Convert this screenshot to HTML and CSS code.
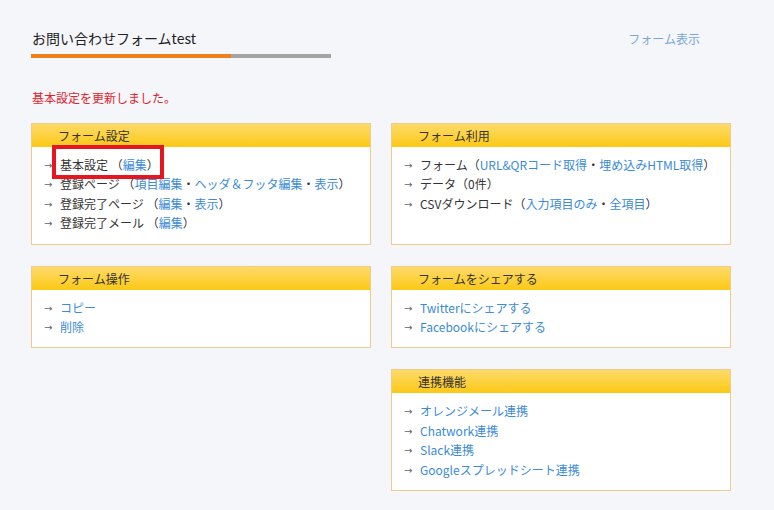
FILE: index.html
```html
<!DOCTYPE html>
<html lang="ja">
<head>
    <meta charset="UTF-8">
    <meta name="viewport" content="width=device-width, initial-scale=1.0">
    <title>お問い合わせフォームtest</title>

    <link rel="stylesheet" href="styles.css">
</head>
<body>

    <div class="page">
        <div class="title_row">
            <div class="title_block">
                <h1 class="title">お問い合わせフォームtest</h1>
                <div class="progress"><span class="progress_done"></span></div>
            </div>
            <a class="view_link" href="#">フォーム表示</a>
        </div>

        <p class="notice">基本設定を更新しました。</p>

        <div class="panels">
            <div class="panel">
                <div class="panel_head">フォーム設定</div>
                <ul class="panel_body">
                    <li>基本設定 （<a href="#">編集</a>）</li>
                    <li>登録ページ （<a href="#">項目編集</a>・<a href="#">ヘッダ＆フッタ編集</a>・<a href="#">表示</a>）</li>
                    <li>登録完了ページ （<a href="#">編集</a>・<a href="#">表示</a>）</li>
                    <li>登録完了メール （<a href="#">編集</a>）</li>
                </ul>
                <span class="highlight"></span>
            </div>

            <div class="panel">
                <div class="panel_head">フォーム利用</div>
                <ul class="panel_body">
                    <li>フォーム（<a href="#">URL&amp;QRコード取得</a>・<a href="#">埋め込みHTML取得</a>）</li>
                    <li>データ（0件）</li>
                    <li>CSVダウンロード（<a href="#">入力項目のみ</a>・<a href="#">全項目</a>）</li>
                </ul>
            </div>

            <div class="panel">
                <div class="panel_head">フォーム操作</div>
                <ul class="panel_body">
                    <li><a href="#">コピー</a></li>
                    <li><a href="#">削除</a></li>
                </ul>
            </div>

            <div class="panel">
                <div class="panel_head">フォームをシェアする</div>
                <ul class="panel_body">
                    <li><a href="#">Twitterにシェアする</a></li>
                    <li><a href="#">Facebookにシェアする</a></li>
                </ul>
            </div>

            <div class="panel panel_right">
                <div class="panel_head">連携機能</div>
                <ul class="panel_body">
                    <li><a href="#">オレンジメール連携</a></li>
                    <li><a href="#">Chatwork連携</a></li>
                    <li><a href="#">Slack連携</a></li>
                    <li><a href="#">Googleスプレッドシート連携</a></li>
                </ul>
            </div>
        </div>
    </div>

</body>
</html>
```

FILE: styles.css
```css
*,*::after,*::before{
    box-sizing: border-box;
    margin: 0;
    padding: 0;
}

body{
    background-color: #f5f6fa;
    font-family: "Noto Sans CJK JP", "Noto Sans", sans-serif;
    color: #333;
}

a{
    color: #3b8bd6;
    text-decoration: none;
}

.page{
    padding: 28px 0 0 31px;
    width: 731px;
}

.title_row{
    display: flex;
    justify-content: space-between;
    align-items: flex-start;
}

.title{
    font-size: 14px;
    font-weight: normal;
    line-height: 20px;
    color: #222;
    padding-left: 1px;
}

.progress{
    display: flex;
    width: 300px;
    height: 4px;
    margin-top: 6px;
    background-color: #a3a3a3;
}

.progress_done{
    width: 200px;
    background-color: #ef7f1a;
}

.view_link{
    font-size: 12px;
    line-height: 20px;
    color: #79a6dc;
    margin-top: 1px;
    margin-right: 31px;
}

.notice{
    margin-top: 31px;
    font-size: 12px;
    line-height: 18px;
    color: #e3222b;
    padding-left: 1px;
}

.panels{
    display: grid;
    grid-template-columns: 340px 340px;
    column-gap: 20px;
    row-gap: 21px;
    margin-top: 16px;
}

.panel{
    position: relative;
    background-color: #fff;
    border: 1px solid #f1cb8c;
}

.panel_right{
    grid-column: 2;
}

.panel_head{
    height: 23px;
    padding-left: 26px;
    font-size: 12px;
    line-height: 23px;
    color: #333;
    background: linear-gradient(#fdda6a, #fcc915);
}

.panel_body{
    list-style: none;
    padding: 8px 12px 11px;
    font-size: 12px;
}

.panel_body li{
    display: flex;
    height: 19.4px;
    line-height: 19.4px;
    white-space: nowrap;
}

.panel_body li::before{
    content: "→";
    flex: none;
    width: 16px;
    padding-top: 2px;
    font-family: "DejaVu Sans", sans-serif;
    font-size: 10px;
    line-height: 17px;
    color: #666;
}

.highlight{
    position: absolute;
    top: 21px;
    left: 20px;
    width: 112px;
    height: 34px;
    border: 4px solid #e6161e;
}
```
